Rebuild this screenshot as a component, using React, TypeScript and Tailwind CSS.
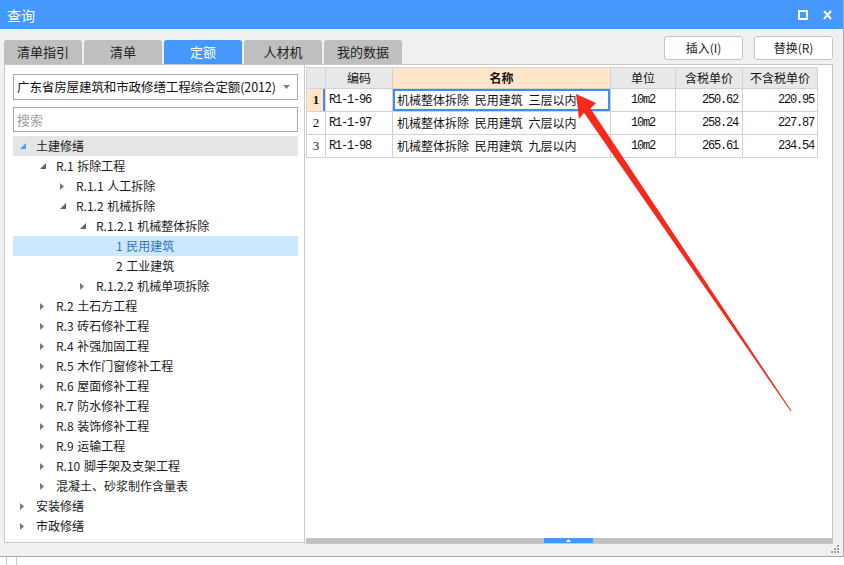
const CJK = "font-['Noto_Sans_CJK_SC','Noto_Sans',sans-serif]"

type Node = { l: number; t: string; s: 'open' | 'closed' | 'leaf'; sel?: boolean; hot?: boolean }

const tree: Node[] = [
  { l: 0, t: '土建修缮', s: 'open', hot: true },
  { l: 1, t: 'R.1 拆除工程', s: 'open' },
  { l: 2, t: 'R.1.1 人工拆除', s: 'closed' },
  { l: 2, t: 'R.1.2 机械拆除', s: 'open' },
  { l: 3, t: 'R.1.2.1 机械整体拆除', s: 'open' },
  { l: 4, t: '1 民用建筑', s: 'leaf', sel: true },
  { l: 4, t: '2 工业建筑', s: 'leaf' },
  { l: 3, t: 'R.1.2.2 机械单项拆除', s: 'closed' },
  { l: 1, t: 'R.2 土石方工程', s: 'closed' },
  { l: 1, t: 'R.3 砖石修补工程', s: 'closed' },
  { l: 1, t: 'R.4 补强加固工程', s: 'closed' },
  { l: 1, t: 'R.5 木作门窗修补工程', s: 'closed' },
  { l: 1, t: 'R.6 屋面修补工程', s: 'closed' },
  { l: 1, t: 'R.7 防水修补工程', s: 'closed' },
  { l: 1, t: 'R.8 装饰修补工程', s: 'closed' },
  { l: 1, t: 'R.9 运输工程', s: 'closed' },
  { l: 1, t: 'R.10 脚手架及支架工程', s: 'closed' },
  { l: 1, t: '混凝土、砂浆制作含量表', s: 'closed' },
  { l: 0, t: '安装修缮', s: 'closed' },
  { l: 0, t: '市政修缮', s: 'closed' },
]

const indent = ['pl-[7px]', 'pl-[27px]', 'pl-[47px]', 'pl-[67px]', 'pl-[87px]']

const rows = [
  { n: '1', code: 'R1-1-96', name: '机械整体拆除 民用建筑 三层以内', unit: '10m2', p1: '250.62', p2: '220.95' },
  { n: '2', code: 'R1-1-97', name: '机械整体拆除 民用建筑 六层以内', unit: '10m2', p1: '258.24', p2: '227.87' },
  { n: '3', code: 'R1-1-98', name: '机械整体拆除 民用建筑 九层以内', unit: '10m2', p1: '265.61', p2: '234.54' },
]

const tabs = ['清单指引', '清单', '定额', '人材机', '我的数据']

export default function App() {
  return (
    <div className={`relative h-[565px] w-[844px] overflow-hidden bg-white ${CJK}`}>
      <div className="flex h-[557px] flex-col border-r border-b border-[#a8a8a8] bg-[#f0f0f0]">
        {/* title bar */}
        <div className="flex h-[29px] shrink-0 items-center justify-between bg-[#4599fe] pl-[7px] pr-[11px] text-white">
          <span className="text-[14px] leading-none">查询</span>
          <div className="flex items-center gap-[15px]">
            <svg width="10" height="10" viewBox="0 0 10 10">
              <rect x="1" y="1" width="8" height="8" fill="none" stroke="white" strokeWidth="2" />
            </svg>
            <svg width="9" height="10" viewBox="0 0 9 10">
              <path d="M1 1 L8 9 M8 1 L1 9" stroke="white" strokeWidth="2" />
            </svg>
          </div>
        </div>

        {/* toolbar */}
        <div className="flex h-[35px] shrink-0 justify-between pl-[4px] pr-[10px]">
          <div className="mt-[11px] flex gap-[2px]">
            {tabs.map((t) => (
              <div
                key={t}
                className={`flex h-[24px] w-[78px] items-center justify-center rounded-t-[3px] text-[13px] ${
                  t === '定额' ? 'bg-[#4599fe] text-white' : 'bg-[#bfbfbf] text-[#222]'
                }`}
              >
                {t}
              </div>
            ))}
          </div>
          <div className="mt-[7px] flex gap-[11px]">
            <ToolButton>插入(I)</ToolButton>
            <ToolButton>替换(R)</ToolButton>
          </div>
        </div>

        {/* main area */}
        <div className="flex h-[480px] shrink-0 pl-[4px] pr-[10px]">
          <LeftPanel />
          <RightPanel />
        </div>

        {/* status */}
        <div className="flex flex-1 items-end justify-end pb-[2px] pr-[3px]">
          <svg width="9" height="9" viewBox="0 0 9 9" fill="#a0a0a0">
            <rect x="6" y="0" width="2" height="2" />
            <rect x="3" y="3" width="2" height="2" />
            <rect x="6" y="3" width="2" height="2" />
            <rect x="0" y="6" width="2" height="2" />
            <rect x="3" y="6" width="2" height="2" />
            <rect x="6" y="6" width="2" height="2" />
          </svg>
        </div>
      </div>

      {/* underlying window edge */}
      <div className="flex h-[8px] pl-[6px]">
        <div className="h-full w-[11px] border-x border-[#c8c8c8]" />
      </div>

      {/* annotation arrow */}
      <svg className="pointer-events-none absolute left-0 top-0" width="844" height="565">
        <polygon
          points="576,94 596,103 590.5,108.4 791.4,410.8 790.6,411.2 584,112.8 579,119"
          fill="#f52a1c"
        />
      </svg>
    </div>
  )
}

function ToolButton({ children }: { children: React.ReactNode }) {
  return (
    <button
      type="button"
      className="flex h-[24px] w-[79px] items-center justify-center rounded-[3px] border border-[#c4c4c4] bg-white text-[12px] text-[#222]"
    >
      {children}
    </button>
  )
}

function LeftPanel() {
  return (
    <div className="flex h-[479px] w-[301px] shrink-0 flex-col border border-[#c8c8c8] bg-white pl-[8px] pr-[6px] pt-[9px]">
      <div className="flex h-[26px] items-center justify-between overflow-hidden border border-[#a9a9a9] pl-[3px] pr-[7px]">
        <span className="whitespace-nowrap text-[12.5px] tracking-[-0.1px] text-[#111]">
          广东省房屋建筑和市政修缮工程综合定额(2012)
        </span>
        <svg width="7" height="4" viewBox="0 0 7 4" className="shrink-0">
          <polygon points="0,0 7,0 3.5,4" fill="#808080" />
        </svg>
      </div>
      <div className="mt-[7px] flex h-[25px] items-center border border-[#a9a9a9] pl-[3px]">
        <span className="text-[13px] text-[#a0a0a0]">搜索</span>
      </div>
      <div className="mt-[4px] flex flex-col">
        {tree.map((n, i) => (
          <div
            key={i}
            className={`flex h-[20px] items-center ${indent[n.l]} ${
              n.sel ? 'bg-[#cce8ff]' : n.hot ? 'bg-[#e5e5e5]' : ''
            }`}
          >
            <span className="flex w-[16px] shrink-0 items-center">
              {n.s === 'open' && (
                <svg width="6" height="6" viewBox="0 0 6 6">
                  <polygon points="6,0 6,6 0,6" fill={n.hot ? '#4a9cff' : '#646464'} />
                </svg>
              )}
              {n.s === 'closed' && (
                <svg width="4" height="7" viewBox="0 0 4 7">
                  <polygon points="0,0 4,3.5 0,7" fill="#7a7a7a" />
                </svg>
              )}
            </span>
            <span
              className={`whitespace-pre text-[12px] leading-none [word-spacing:1px] ${
                n.sel ? 'text-[#3473c4]' : 'text-[#1a1a1a]'
              }`}
            >
              {n.t}
            </span>
          </div>
        ))}
      </div>
    </div>
  )
}

function RightPanel() {
  return (
    <div className="flex h-[480px] flex-1 flex-col border-y border-r border-[#c8c8c8] bg-white pl-px pt-[2px]">
      <div className="flex-1">
        {/* header */}
        <div className="flex h-[22px] text-[12px] text-[#111]">
          <div className="w-[20px] border border-[#d2d2d2] bg-[#e8e8e8]" />
          <Head w="w-[67px]">编码</Head>
          <div className="flex w-[218px] items-center justify-center border-y border-r border-[#d2d2d2] bg-[#ffe6c8] font-bold">
            名称
          </div>
          <Head w="w-[65px]">单位</Head>
          <Head w="w-[67px]">含税单价</Head>
          <Head w="w-[75px]">不含税单价</Head>
        </div>
        {rows.map((r, i) => (
          <div key={r.n} className="flex h-[23px] text-[12px] text-[#111]">
            <div
              className={`flex w-[20px] items-center justify-center border-x border-b border-[#d2d2d2] font-['Liberation_Serif',serif] text-[13px] ${
                i === 0 ? 'bg-[#ffe6c8] font-bold shadow-[inset_-2px_0_0_#3d8ef0]' : ''
              }`}
            >
              {r.n}
            </div>
            <div className="flex w-[67px] items-center border-r border-b border-[#d2d2d2] pl-[3px] font-['Liberation_Mono',monospace] tracking-[-1.2px]">
              {r.code}
            </div>
            <div
              className={`flex w-[218px] items-center whitespace-pre border-r border-b border-[#d2d2d2] pl-[4px] [word-spacing:3px] ${
                i === 0 ? 'shadow-[inset_0_0_0_2px_#3d8ef0]' : ''
              }`}
            >
              {r.name}
            </div>
            <div className="flex w-[65px] items-center justify-center border-r border-b border-[#d2d2d2] font-['Liberation_Mono',monospace] tracking-[-1.2px]">
              {r.unit}
            </div>
            <div className="flex w-[67px] items-center justify-end border-r border-b border-[#d2d2d2] pr-[4px] font-['Liberation_Mono',monospace] tracking-[-1.2px]">
              {r.p1}
            </div>
            <div className="flex w-[75px] items-center justify-end border-r border-b border-[#d2d2d2] pr-[3px] font-['Liberation_Mono',monospace] tracking-[-1.2px]">
              {r.p2}
            </div>
          </div>
        ))}
      </div>
      {/* horizontal scrollbar */}
      <div className="flex h-[5px] shrink-0 bg-[#c0c0c0]">
        <div className="ml-[238px] flex h-full w-[49px] items-center justify-center bg-[#4599fe]">
          <svg width="5" height="3" viewBox="0 0 5 3">
            <polygon points="2.5,0 5,3 0,3" fill="white" />
          </svg>
        </div>
      </div>
    </div>
  )
}

function Head({ w, children }: { w: string; children: React.ReactNode }) {
  return (
    <div className={`flex ${w} items-center justify-center border-y border-r border-[#d2d2d2] bg-[#e8e8e8]`}>
      {children}
    </div>
  )
}
